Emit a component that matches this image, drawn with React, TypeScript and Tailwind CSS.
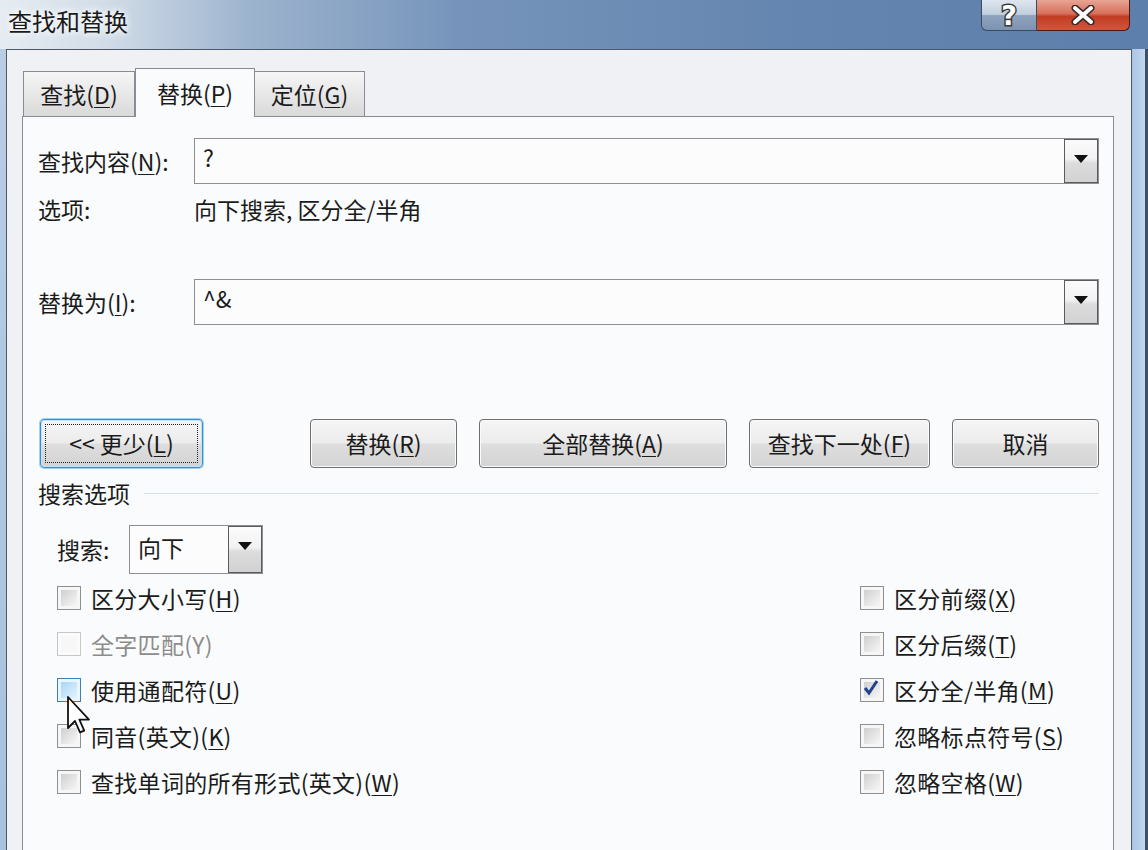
import React from 'react';

const font = "font-['Noto_Sans_CJK_SC','Noto_Sans',sans-serif]";

const Key = ({ k }: { k: string }) => (
  <>
    (<span className="underline underline-offset-[3px] decoration-1">{k}</span>)
  </>
);

const DropBtn = () => (
  <div className="flex w-[34px] shrink-0 items-start justify-center border border-[#5b5b5b] bg-[linear-gradient(to_bottom,#fbfbfb_0%,#f2f2f2_45%,#dcdcdc_55%,#d2d2d2_100%)] pt-[15px]">
    <svg width="14" height="8" viewBox="0 0 14 8">
      <path d="M0 0 L14 0 L7 8 Z" fill="#111" />
    </svg>
  </div>
);

const Combo = ({ value }: { value: string }) => (
  <div className="flex h-[46px] flex-1 border border-[#8d8f93] bg-[#fcfcfd]">
    <div className="flex-1 pl-[8px] pt-[3px] text-[23px] leading-[30px]">{value}</div>
    <DropBtn />
  </div>
);

const Button = ({ children, w, focused }: { children: React.ReactNode; w: string; focused?: boolean }) => (
  <div
    className={`${w} h-[49px] rounded-[4px] border ${
      focused
        ? 'border-[#3d8ccc] shadow-[0_0_0_1px_#9fd3f3,inset_0_0_0_1px_#bfe4f8]'
        : 'border-[#6f6f6f] shadow-[inset_0_0_0_1px_#fbfbfb]'
    } bg-[linear-gradient(to_bottom,#f5f5f5_0%,#ececec_48%,#dedede_52%,#d3d3d3_100%)] p-[4px]`}
  >
    <div
      className={`flex h-full items-center justify-center text-[23px] ${
        focused ? 'border border-dotted border-[#222]' : ''
      }`}
    >
      {children}
    </div>
  </div>
);

type Box = 'normal' | 'disabled' | 'hover' | 'checked';

const Check = ({ state, children }: { state: Box; children: React.ReactNode }) => (
  <div className="flex h-[46px] items-center">
    <div
      className={`flex h-[24px] w-[24px] shrink-0 items-center justify-center border p-[3px] ${
        state === 'disabled'
          ? 'border-[#c7c7c7] bg-[#fbfbfb]'
          : state === 'hover'
            ? 'border-[#3c7fb1] bg-[#eaf6fd]'
            : 'border-[#8e8f8f] bg-[#f6f6f6]'
      }`}
    >
      <div
        className={`relative h-full w-full ${
          state === 'disabled'
            ? 'bg-[#f7f7f7]'
            : state === 'hover'
              ? 'bg-[linear-gradient(135deg,#a9d6f5,#e3f3fc)]'
              : 'bg-[linear-gradient(135deg,#cfcfcf,#f7f7f7)]'
        }`}
      >
        {state === 'checked' && (
          <svg className="absolute -left-[2px] -top-[3px]" width="18" height="18" viewBox="0 0 18 18">
            <path d="M3 9 L7 14 L15 2" fill="none" stroke="#24418c" strokeWidth="3" />
          </svg>
        )}
      </div>
    </div>
    <span className={`ml-[10px] text-[23px] tracking-[0.3px] ${state === 'disabled' ? 'text-[#8c8c8c]' : ''}`}>{children}</span>
  </div>
);

const App = () => {
  return (
    <div className={`relative flex h-[850px] w-[1148px] flex-col overflow-hidden bg-[#9fb9d8] text-[#1b1b1b] ${font}`}>
      {/* title bar */}
      <div className="flex h-[49px] shrink-0 items-start justify-between bg-[linear-gradient(to_right,#e6ecf2_0%,#d2dde8_9%,#9cb3cd_22%,#7694bb_40%,#6485af_70%,#5d7fab_100%)]">
        <div className="pl-[8px] pt-[5px] text-[24px] leading-[32px] [text-shadow:0_0_10px_#ffffff,0_0_6px_#ffffff]">查找和替换</div>
        <div className="mr-[18px] flex">
          <div className="flex h-[31px] w-[56px] items-center justify-center rounded-bl-[6px] border border-t-0 border-[#3a4b60] bg-[linear-gradient(to_bottom,#dfe6ef_0%,#c2cedd_48%,#8fa3bd_52%,#7d93b1_100%)]">
            <span className="font-['DejaVu_Sans',sans-serif] text-[27px] font-bold leading-none text-white [-webkit-text-stroke:3px_#3a3a3a] [paint-order:stroke_fill]">?</span>
          </div>
          <div className="flex h-[31px] w-[93px] items-center justify-center rounded-br-[6px] border border-t-0 border-l-0 border-[#4b1a15] bg-[linear-gradient(to_bottom,#e8a493_0%,#d7705c_45%,#c23d22_55%,#d0563c_100%)]">
            <svg width="24" height="20" viewBox="0 0 24 20">
              <path d="M4 3 L20 17 M20 3 L4 17" stroke="#3a2a2a" strokeWidth="7" strokeLinecap="round" />
              <path d="M4 3 L20 17 M20 3 L4 17" stroke="#fff" strokeWidth="4" strokeLinecap="round" />
            </svg>
          </div>
        </div>
      </div>

      <div className="flex flex-1">
        {/* left frame */}
        <div className="w-[6px] bg-[linear-gradient(to_bottom,#b9cde4,#a7c1df)]" />

        {/* client area */}
        <div className="flex w-[1126px] flex-col border-x border-t border-[#4f5965] bg-[#eff1f4]">
          {/* tabs */}
          <div className="ml-[16px] mt-[18px] flex h-[48px] items-end">
            <div className="flex h-[45px] w-[112px] items-center justify-center border border-b-0 border-[#898c95] bg-[linear-gradient(to_bottom,#f6f6f6,#d9d9d9)] text-[23px]">
              查找<Key k="D" />
            </div>
            <div className="relative z-10 -mb-px flex h-[49px] w-[120px] items-center justify-center border border-b-0 border-[#898c95] bg-[#fafbfc] text-[23px]">
              替换<Key k="P" />
            </div>
            <div className="flex h-[45px] w-[110px] items-center justify-center border border-b-0 border-l-0 border-[#898c95] bg-[linear-gradient(to_bottom,#f6f6f6,#d9d9d9)] text-[23px]">
              定位<Key k="G" />
            </div>
          </div>

          {/* tab panel */}
          <div className="ml-[15px] flex w-[1092px] flex-1 flex-col border border-b-0 border-[#898c95] bg-[#fafbfc] pl-[15px] pr-[14px]">
            <div className="mt-[21px] flex items-center">
              <div className="w-[156px] text-[23px]">
                查找内容<Key k="N" />:
              </div>
              <Combo value="?" />
            </div>

            <div className="mt-[10px] flex h-[30px] items-center text-[23px]">
              <div className="w-[156px]">选项:</div>
              <div>向下搜索, 区分全/半角</div>
            </div>

            <div className="mt-[55px] flex items-center">
              <div className="w-[156px] text-[23px]">
                替换为<Key k="I" />:
              </div>
              <Combo value="^&" />
            </div>

            <div className="mt-[94px] flex items-center">
              <div className="ml-[2px]">
                <Button w="w-[163px]" focused>
                  &lt;&lt; 更少<Key k="L" />
                </Button>
              </div>
              <div className="ml-auto flex gap-[22px]">
                <Button w="w-[147px]">
                  替换<Key k="R" />
                </Button>
                <Button w="w-[248px]">
                  全部替换<Key k="A" />
                </Button>
                <Button w="w-[181px]">
                  查找下一处<Key k="F" />
                </Button>
                <Button w="w-[147px]">取消</Button>
              </div>
            </div>

            <div className="mt-[11px] flex h-[28px] items-center">
              <span className="text-[23px]">搜索选项</span>
              <div className="ml-[14px] h-px flex-1 bg-[#d5dfe5]" />
            </div>

            <div className="ml-[19px] mt-[18px] flex items-center">
              <div className="w-[72px] text-[23px]">搜索:</div>
              <div className="flex h-[49px] w-[134px] border border-[#8d8f93] bg-[#fcfcfd]">
                <div className="flex-1 pl-[8px] pt-[6px] text-[23px] leading-[30px]">向下</div>
                <DropBtn />
              </div>
            </div>

            <div className="ml-[19px] mt-[1px] flex">
              <div className="flex w-[803px] flex-col">
                <Check state="normal">
                  区分大小写<Key k="H" />
                </Check>
                <Check state="disabled">全字匹配(Y)</Check>
                <Check state="hover">
                  使用通配符<Key k="U" />
                </Check>
                <Check state="normal">
                  同音(英文)<Key k="K" />
                </Check>
                <Check state="normal">
                  查找单词的所有形式(英文)<Key k="W" />
                </Check>
              </div>
              <div className="flex flex-col">
                <Check state="normal">
                  区分前缀<Key k="X" />
                </Check>
                <Check state="normal">
                  区分后缀<Key k="T" />
                </Check>
                <Check state="checked">
                  区分全/半角<Key k="M" />
                </Check>
                <Check state="normal">
                  忽略标点符号<Key k="S" />
                </Check>
                <Check state="normal">
                  忽略空格<Key k="W" />
                </Check>
              </div>
            </div>
          </div>
        </div>

        {/* right frame */}
        <div className="flex-1 border-r-[3px] border-[#3f4f63] bg-[linear-gradient(to_right,#a9c4e4,#c3d8f0)]" />
      </div>

      {/* mouse cursor */}
      <svg className="absolute left-[67px] top-[696px]" width="24" height="38" viewBox="0 0 12 19">
        <path d="M0.5 0.5 L0.5 16 L4 12.5 L6.5 18.2 L8.6 17.3 L6.2 11.8 L11 11.8 Z" fill="#fff" stroke="#111" strokeWidth="0.9" strokeLinejoin="round" />
      </svg>
    </div>
  );
};

export default App;
